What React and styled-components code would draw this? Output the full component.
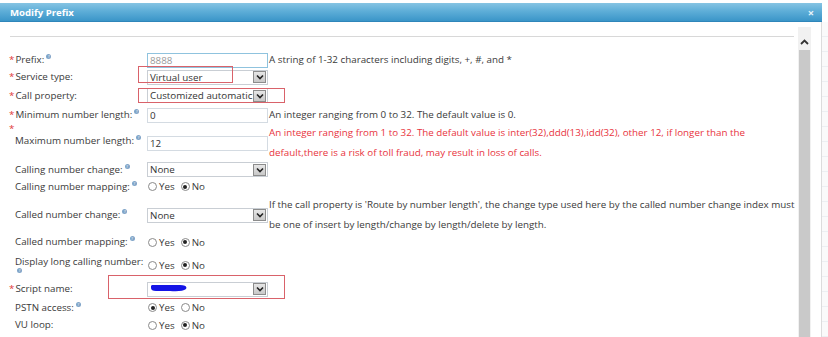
import React from 'react';
import styled, { createGlobalStyle } from 'styled-components';

const GlobalStyle = createGlobalStyle`
  html, body {
    margin: 0;
    padding: 0;
    background: #fff;
  }
  body {
    font-family: "Open Sans", "Noto Sans", Arial, sans-serif;
    color: #333;
  }
`;

const rows = [
  { label: 'Prefix:', required: true, help: true, h: 18, control: { type: 'input', value: '8888', focus: true }, hint: ['A string of 1-32 characters including digits, +, #, and *'] },
  { label: 'Service type:', required: true, h: 18, control: { type: 'select', value: 'Virtual user' }, mark: { left: -9, top: -2, width: 95, height: 17 } },
  { label: 'Call property:', required: true, h: 19, control: { type: 'select', value: 'Customized automatic' }, mark: { left: -9, top: 2, width: 147, height: 15 } },
  { label: 'Minimum number length:', required: true, help: true, h: 18, control: { type: 'input', value: '0' }, hint: ['An integer ranging from 0 to 32. The default value is 0.'] },
  {
    label: 'Maximum number length:', required: true, stacked: true, help: true, h: 38, warn: true,
    control: { type: 'input', value: '12' },
    hint: [
      'An integer ranging from 1 to 32. The default value is inter(32),ddd(13),idd(32), other 12, if longer than the',
      'default,there is a risk of toll fraud, may result in loss of calls.',
    ],
  },
  { label: 'Calling number change:', help: true, h: 17, control: { type: 'select', value: 'None' } },
  { label: 'Calling number mapping:', help: true, h: 17, control: { type: 'radio', yes: false } },
  {
    label: 'Called number change:', help: true, h: 38,
    control: { type: 'select', value: 'None' },
    hint: [
      "If the call property is 'Route by number length', the change type used here by the called number change index must",
      'be one of insert by length/change by length/delete by length.',
    ],
  },
  { label: 'Called number mapping:', help: true, h: 18, control: { type: 'radio', yes: false } },
  { label: 'Display long calling number:', helpBelow: true, h: 28, control: { type: 'radio', yes: false } },
  { label: 'Script name:', required: true, h: 20, control: { type: 'select', value: '', masked: true }, mark: { left: -39, top: -4, width: 177, height: 24 } },
  { label: 'PSTN access:', help: true, h: 17, control: { type: 'radio', yes: true } },
  { label: 'VU loop:', h: 18, control: { type: 'radio', yes: false } },
];

function Help() {
  return <HelpDot>?</HelpDot>;
}

function Chevron() {
  return (
    <svg width="8" height="6" viewBox="0 0 8 6">
      <path d="M1 1.5 L4 4.5 L7 1.5" fill="none" stroke="#222" strokeWidth="1.6" />
    </svg>
  );
}

function Radio({ checked, children }) {
  return (
    <RadioItem>
      <RadioCircle checked={checked} />
      {children}
    </RadioItem>
  );
}

function Control({ control }) {
  if (control.type === 'input') {
    return <Input focus={control.focus}>{control.value}</Input>;
  }
  if (control.type === 'select') {
    return (
      <Select>
        <SelectText>
          {control.masked ? (
            <Scribble width="40" height="11" viewBox="0 0 40 11">
              <path d="M1 4 Q3 1 10 2 L30 3 Q38 3 36 7 Q32 10 20 9 L6 9 Q1 9 1 6 Z" fill="#1414e6" />
            </Scribble>
          ) : (
            control.value
          )}
        </SelectText>
        <DropButton>
          <Chevron />
        </DropButton>
      </Select>
    );
  }
  return (
    <RadioGroup>
      <Radio checked={control.yes}>Yes</Radio>
      <Radio checked={!control.yes}>No</Radio>
    </RadioGroup>
  );
}

export default function App() {
  return (
    <Window>
      <GlobalStyle />
      <TitleBar>
        <Title>Modify Prefix</Title>
        <Close>×</Close>
      </TitleBar>
      <Body>
        <Main>
          <Separator />
          <Form>
            {rows.map((row, i) => (
              <Row key={i} h={row.h}>
                <LabelCell stacked={row.stacked} helpBelow={row.helpBelow}>
                  {row.stacked ? (
                    <>
                      <Star>*</Star>
                      <LabelText indent>
                        {row.label}
                        {row.help && <Help />}
                      </LabelText>
                    </>
                  ) : (
                    <LabelText indent={!row.required}>
                      {row.required && <Star>*</Star>}
                      {row.label}
                      {row.help && <Help />}
                    </LabelText>
                  )}
                  {row.helpBelow && (
                    <BelowHelp>
                      <Help />
                    </BelowHelp>
                  )}
                </LabelCell>
                <ControlCell>
                  <Control control={row.control} />
                  {row.mark && <Mark style={row.mark} />}
                </ControlCell>
                {row.hint && (
                  <Hint warn={row.warn}>
                    {row.hint.map((line, j) => (
                      <HintLine key={j}>{line}</HintLine>
                    ))}
                  </Hint>
                )}
              </Row>
            ))}
          </Form>
        </Main>
        <ScrollBar>
          <ScrollArrow>
            <svg width="9" height="6" viewBox="0 0 9 6">
              <path d="M1 5 L4.5 1.5 L8 5" fill="none" stroke="#333" strokeWidth="1.8" />
            </svg>
          </ScrollArrow>
          <Thumb />
        </ScrollBar>
        <Gutter />
        <OuterEdge />
      </Body>
    </Window>
  );
}

const Window = styled.div`
  width: 828px;
  height: 337px;
  overflow: hidden;
  background: #fff;
  display: flex;
  flex-direction: column;
`;

const TitleBar = styled.div`
  margin-top: 3px;
  width: 822px;
  height: 19px;
  box-sizing: border-box;
  background: linear-gradient(to bottom, #86c4e3 0%, #5eaed8 45%, #3b95c8 100%);
  border-bottom: 1px solid #2f86ba;
  display: flex;
  align-items: center;
  justify-content: space-between;
  padding: 0 8px 0 10px;
`;

const Title = styled.span`
  color: #fff;
  font-weight: bold;
  font-size: 9.6px;
`;

const Close = styled.span`
  color: #e8f4fb;
  font-weight: bold;
  font-size: 11px;
  line-height: 1;
`;

const Body = styled.div`
  flex: 1;
  display: flex;
  min-height: 0;
`;

const Main = styled.div`
  width: 799px;
  padding-top: 14px;
  box-sizing: border-box;
`;

const Separator = styled.div`
  height: 1px;
  background: #d8d8d8;
  margin: 0 4px 0 10px;
`;

const Form = styled.div`
  margin-top: 13px;
  padding-left: 9px;
`;

const Row = styled.div`
  display: grid;
  grid-template-columns: 138px 121px 1fr;
  align-items: center;
  height: ${({ h }) => h}px;
  font-size: 9.8px;
`;

const LabelCell = styled.div`
  align-self: ${({ stacked, helpBelow }) => (stacked || helpBelow ? 'start' : 'center')};
  padding-top: ${({ helpBelow }) => (helpBelow ? 5 : 0)}px;
  display: flex;
  flex-direction: column;
`;

const LabelText = styled.span`
  padding-left: ${({ indent }) => (indent ? 6 : 0)}px;
  line-height: 12px;
  white-space: nowrap;
  color: #3a3a3a;
`;

const Star = styled.span`
  color: #e03a3a;
  line-height: 12px;
  margin-right: 1px;
`;

const HelpDot = styled.span`
  display: inline-block;
  width: 5px;
  height: 5px;
  border-radius: 50%;
  background: #7fa4c8;
  color: #fff;
  font-size: 4px;
  line-height: 5px;
  text-align: center;
  vertical-align: 5px;
  margin-left: 2px;
`;

const BelowHelp = styled.span`
  padding-left: 6px;
  line-height: 8px;
`;

const ControlCell = styled.div`
  position: relative;
  height: 100%;
  display: flex;
  align-items: center;
`;

const Input = styled.div`
  width: 121px;
  height: 15px;
  box-sizing: border-box;
  border: 1px solid ${({ focus }) => (focus ? '#8fc3de' : '#d4dbe2')};
  padding: 0 2px;
  line-height: 13px;
  color: ${({ focus }) => (focus ? '#9a9a9a' : '#333')};
  background: #fff;
`;

const Select = styled.div`
  width: 121px;
  height: 15px;
  box-sizing: border-box;
  border: 1px solid #c9ced4;
  display: flex;
  align-items: center;
  background: #fff;
`;

const SelectText = styled.span`
  flex: 1;
  overflow: hidden;
  white-space: nowrap;
  padding-left: 2px;
  line-height: 13px;
  display: flex;
  align-items: center;
`;

const Scribble = styled.svg`
  display: block;
  margin-top: -3px;
`;

const DropButton = styled.span`
  flex: none;
  width: 13px;
  height: 12px;
  box-sizing: border-box;
  margin-right: 1px;
  border: 1px solid #8c8c8c;
  background: linear-gradient(#e6e6e6, #c8c8c8);
  display: flex;
  align-items: center;
  justify-content: center;
`;

const RadioGroup = styled.div`
  display: flex;
  gap: 6px;
  padding-left: 1px;
`;

const RadioItem = styled.span`
  display: inline-flex;
  align-items: center;
  gap: 2px;
  color: #3a3a3a;
`;

const RadioCircle = styled.span`
  width: 9px;
  height: 9px;
  box-sizing: border-box;
  border-radius: 50%;
  border: 1px solid #8a8a8a;
  background: #fff;
  display: inline-flex;
  align-items: center;
  justify-content: center;
  &::after {
    content: '';
    width: 4px;
    height: 4px;
    border-radius: 50%;
    background: ${({ checked }) => (checked ? '#222' : 'transparent')};
  }
`;

const Mark = styled.div`
  position: absolute;
  box-sizing: border-box;
  border: 1px solid #d9626a;
  pointer-events: none;
`;

const Hint = styled.div`
  padding-left: 1px;
  color: ${({ warn }) => (warn ? '#e8333d' : '#3a3a3a')};
`;

const HintLine = styled.div`
  line-height: 20px;
  white-space: nowrap;
`;

const ScrollBar = styled.div`
  width: 13px;
  margin-top: 5px;
  background: #f1f1f1;
  display: flex;
  flex-direction: column;
  align-items: center;
`;

const ScrollArrow = styled.div`
  height: 23px;
  display: flex;
  align-items: center;
  justify-content: center;
  padding-top: 6px;
  box-sizing: border-box;
`;

const Thumb = styled.div`
  flex: 1;
  width: 11px;
  background: #c9c9c9;
`;

const Gutter = styled.div`
  width: 10px;
`;

const OuterEdge = styled.div`
  width: 6px;
  border-left: 1px solid #dcdcdc;
  background: repeating-linear-gradient(to bottom, #fafafa 0 14px, #eceff2 14px 15px);
`;
